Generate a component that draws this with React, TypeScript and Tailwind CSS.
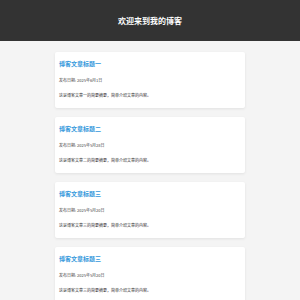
const posts = [
  { title: "博客文章标题一", date: "2025年6月1日", summary: "这是博客文章一的简要摘要，简单介绍文章的内容。" },
  { title: "博客文章标题二", date: "2025年5月28日", summary: "这是博客文章二的简要摘要，简单介绍文章的内容。" },
  { title: "博客文章标题三", date: "2025年5月20日", summary: "这是博客文章三的简要摘要，简单介绍文章的内容。" },
  { title: "博客文章标题三", date: "2025年5月20日", summary: "这是博客文章三的简要摘要，简单介绍文章的内容。" },
];

const PostCard = ({ title, date, summary }: { title: string; date: string; summary: string }) => {
  return (
    <div className="w-[190px] h-[56px] shrink-0 bg-white rounded-[2px] shadow-[0_1px_3px_rgba(0,0,0,0.08)] pl-[4px] pr-[4px] pt-[8px]">
      <h2 className="text-[6px] leading-[8px] font-bold text-[#3498db]">{title}</h2>
      <p className="mt-[9px] text-[4px] leading-[6px] text-[#444]">发布日期: {date}</p>
      <p className="mt-[9px] text-[4px] leading-[6px] text-[#333]">{summary}</p>
    </div>
  );
};

export default function App() {
  return (
    <div
      className="w-[300px] h-[300px] overflow-hidden bg-[#f4f4f4]"
      style={{ fontFamily: '"Noto Sans CJK SC", "Noto Sans", sans-serif' }}
    >
      <header className="h-[41px] bg-[#333333] flex items-center justify-center">
        <h1 className="text-[8px] leading-[10px] font-bold text-white">欢迎来到我的博客</h1>
      </header>
      <main className="flex flex-col items-center gap-[9px] pt-[11px]">
        {posts.map((p, i) => (
          <PostCard key={i} {...p} />
        ))}
      </main>
    </div>
  );
}
